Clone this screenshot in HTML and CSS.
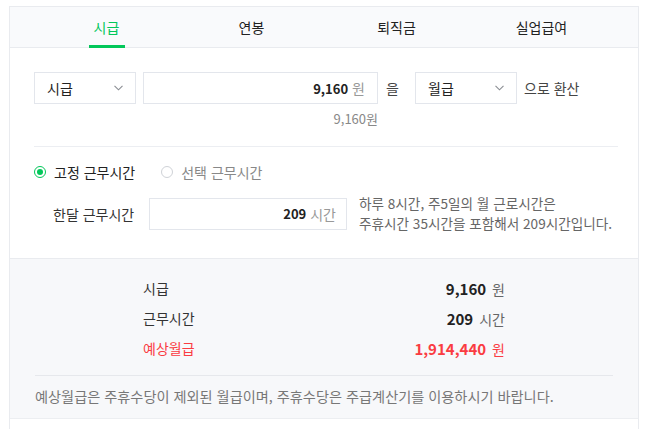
FILE: index.html
```html
<!DOCTYPE html>
<html lang="ko">
<head>
<meta charset="utf-8">
<title>시급 계산기</title>
<link rel="stylesheet" href="styles.css">
</head>
<body>
<div class="calc">
  <nav class="tabs">
    <a class="tab active">시급</a>
    <a class="tab">연봉</a>
    <a class="tab">퇴직금</a>
    <a class="tab">실업급여</a>
  </nav>

  <section class="form">
    <div class="convert-row">
      <div class="select">
        <span>시급</span>
        <svg class="chev" width="9" height="6" viewBox="0 0 9 6"><polyline points="0.5,0.8 4.5,4.8 8.5,0.8" fill="none" stroke="#8a8d93" stroke-width="1.1"/></svg>
      </div>
      <div class="input wide">
        <b>9,160</b><span class="unit">원</span>
      </div>
      <span class="particle">을</span>
      <div class="select">
        <span>월급</span>
        <svg class="chev" width="9" height="6" viewBox="0 0 9 6"><polyline points="0.5,0.8 4.5,4.8 8.5,0.8" fill="none" stroke="#8a8d93" stroke-width="1.1"/></svg>
      </div>
      <span class="suffix">으로 환산</span>
    </div>
    <div class="echo">9,160원</div>

    <hr class="divider">

    <div class="radios">
      <label class="radio on"><span class="dot"></span>고정 근무시간</label>
      <label class="radio"><span class="dot"></span>선택 근무시간</label>
    </div>

    <div class="hours-row">
      <span class="hours-label">한달 근무시간</span>
      <div class="input narrow">
        <b>209</b><span class="unit">시간</span>
      </div>
      <p class="help"><span class="line">하루 8시간, 주5일의 월 근로시간은</span><span class="line">주휴시간 35시간을 포함해서 209시간입니다.</span></p>
    </div>
  </section>

  <section class="result">
    <div class="rows">
      <div class="row"><span class="lbl">시급</span><span class="val"><b>9,160</b><span class="u">원</span></span></div>
      <div class="row"><span class="lbl">근무시간</span><span class="val"><b>209</b><span class="u">시간</span></span></div>
      <div class="row total"><span class="lbl">예상월급</span><span class="val"><b>1,914,440</b><span class="u">원</span></span></div>
    </div>
    <hr class="divider inner">
    <p class="note">예상월급은 주휴수당이 제외된 월급이며, 주휴수당은 주급계산기를 이용하시기 바랍니다.</p>
  </section>
  <div class="tail"></div>
</div>
</body>
</html>
```

FILE: styles.css
```css
* { box-sizing: border-box; }
html, body { margin: 0; padding: 0; background: #fff; }
body {
  font-family: "Noto Sans CJK KR", "Noto Sans", sans-serif;
  font-size: 14px;
  color: #222;
}
.calc {
  margin: 6px 0 0 9px;
  width: 630px;
  border: 1px solid #e9ebef;
  border-bottom: none;
}
.tabs {
  display: grid;
  grid-template-columns: repeat(4, 145px);
  padding: 0 24px;
  height: 41px;
  background: #f9fafc;
  border-bottom: 1px solid #e9ebef;
}
.tab {
  position: relative;
  display: flex;
  align-items: center;
  justify-content: center;
  font-size: 14px;
  color: #222;
  padding-bottom: 1px;
}
.tab.active { color: #03c75a; }
.tab.active::after {
  content: "";
  position: absolute;
  left: 50%;
  bottom: -1px;
  width: 36px;
  margin-left: -18px;
  height: 3px;
  background: #03c75a;
}
.form { padding: 24px 20px 25px 24px; }
.convert-row {
  display: flex;
  align-items: center;
  gap: 7px;
  height: 32px;
}
.select {
  width: 102px;
  height: 32px;
  border: 1px solid #e3e6ec;
  display: flex;
  align-items: center;
  justify-content: space-between;
  padding: 0 12px 0 12px;
  color: #222;
}
.input {
  height: 32px;
  border: 1px solid #e3e6ec;
  display: flex;
  align-items: center;
  justify-content: flex-end;
  padding: 0 12px;
  gap: 4px;
  flex-shrink: 0;
}
.input b { font-weight: 700; color: #222; font-size: 13px; }
.input .unit { color: #999; }
.input.wide { width: 235px; }
.particle { width: 23px; padding-left: 1px; color: #444; }
.suffix { color: #444; }
.echo {
  margin: 6px 0 0 109px;
  width: 235px;
  text-align: right;
  line-height: 18px;
  font-size: 13px;
  color: #888;
}
.divider {
  border: 0;
  border-top: 1px solid #eceef2;
  margin: 18px 0 0;
  height: 0;
}
.radios {
  display: flex;
  gap: 26px;
  margin-top: 16px;
  line-height: 18px;
}
.radio {
  display: flex;
  align-items: center;
  gap: 8px;
  color: #888;
}
.radio.on { color: #222; }
.dot {
  width: 12px;
  height: 12px;
  border-radius: 50%;
  border: 1px solid #cfd2d7;
  display: flex;
  align-items: center;
  justify-content: center;
}
.radio.on .dot { border-color: #03c75a; }
.radio.on .dot::after {
  content: "";
  width: 6px;
  height: 6px;
  border-radius: 50%;
  background: #03c75a;
}
.hours-row {
  display: flex;
  align-items: center;
  margin-top: 13px;
}
.hours-label { width: 115px; flex-shrink: 0; padding-left: 19px; color: #333; }
.input.narrow { width: 198px; padding-right: 10px; }
.help {
  margin: 0 0 0 12px;
  font-size: 13.6px;
  white-space: nowrap;
  flex-shrink: 0;
  color: #666;
}
.help .line { display: block; line-height: 19.5px; }
.result {
  background: #f7f8fa;
  border-top: 1px solid #e9ebef;
  border-bottom: 1px solid #eceef1;
  padding: 14px 0 13px;
}
.rows { padding: 0 133px; }
.row {
  display: flex;
  justify-content: space-between;
  align-items: center;
  height: 30px;
}
.lbl { color: #333; }
.val { display: flex; align-items: baseline; }
.val b { font-size: 15px; font-weight: 700; color: #222; }
.val .u { margin-left: 6px; color: #666; }
.row.total .lbl,
.row.total .val b,
.row.total .val .u { color: #fa3c42; }
.divider.inner { margin: 12px 25px 0; border-top-color: #e6e8ec; }
.note {
  margin: 11px 0 0 25px;
  line-height: 18px;
  font-size: 14.2px;
  color: #777;
}
.tail { height: 40px; }
```
